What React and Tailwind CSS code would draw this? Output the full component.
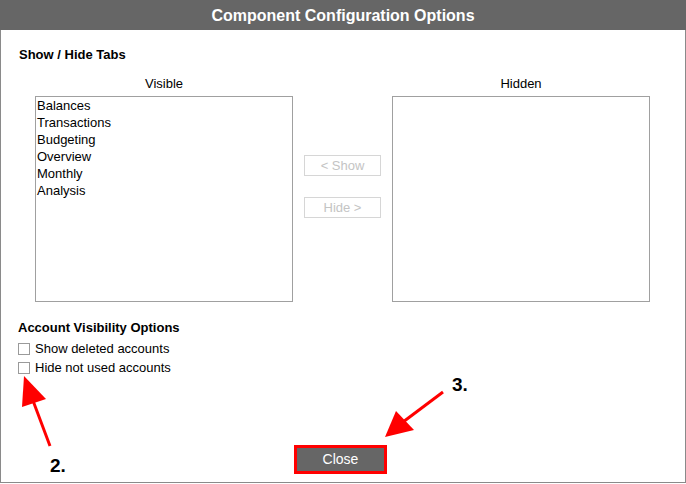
import React from "react";

const VISIBLE_TABS = ["Balances", "Transactions", "Budgeting", "Overview", "Monthly", "Analysis"];

const OPTIONS = ["Show deleted accounts", "Hide not used accounts"];

function Annotations() {
  return (
    <>
      <svg
        className="pointer-events-none absolute left-0 top-0"
        width="686"
        height="484"
        viewBox="0 0 686 484"
      >
        {/* arrow 2 */}
        <line x1="50" y1="446" x2="32" y2="398" stroke="#ff0000" strokeWidth="3" />
        <polygon points="24,376 22,407 46,399" fill="#ff0000" />
        {/* arrow 3 */}
        <line x1="443" y1="392" x2="403" y2="422" stroke="#ff0000" strokeWidth="3" />
        <polygon points="385,437 396,411 414,430" fill="#ff0000" />
      </svg>
      <div className="absolute left-[50px] top-[456px] text-[19px] font-bold leading-[19px] text-black">2.</div>
      <div className="absolute left-[452px] top-[375px] text-[19px] font-bold leading-[19px] text-black">3.</div>
    </>
  );
}

export default function App() {
  return (
    <div
      className="relative w-[686px] h-[484px] bg-white text-[13px] leading-[15px] text-black"
      style={{ fontFamily: '"Liberation Sans", Arial, sans-serif' }}
    >
      {/* Title bar */}
      <div className="flex h-[30px] items-center justify-center bg-[#666666] text-[16px] font-bold text-white">
        Component Configuration Options
      </div>

      <div className="flex h-[453px] flex-col border-x border-b border-[#8a8a8a]">
        {/* Show / Hide tabs */}
        <div className="mt-[17px] pl-[18px] font-bold">Show / Hide Tabs</div>

        <div className="ml-[34px] mt-[14px] flex">
          <div className="flex w-[258px] flex-col">
            <div className="text-center">Visible</div>
            <div className="mt-[5px] h-[206px] border border-[#a0a0a0] px-px leading-[17px]">
              {VISIBLE_TABS.map((t) => (
                <div key={t}>{t}</div>
              ))}
            </div>
          </div>

          <div className="flex w-[99px] flex-col items-center pl-[11px] pr-[11px] pt-[79px]">
            <button className="h-[21px] w-[77px] border border-[#d6d6d6] bg-white text-[#c4c4c4]">
              &lt; Show
            </button>
            <button className="mt-[21px] h-[21px] w-[77px] border border-[#d6d6d6] bg-white text-[#c4c4c4]">
              Hide &gt;
            </button>
          </div>

          <div className="flex w-[258px] flex-col">
            <div className="text-center">Hidden</div>
            <div className="mt-[5px] h-[206px] border border-[#a0a0a0]" />
          </div>
        </div>

        {/* Account visibility */}
        <div className="mt-[18px] pl-[17px] font-bold">Account Visibility Options</div>
        <div className="mt-[4px] flex flex-col pl-[17px]">
          {OPTIONS.map((o) => (
            <label key={o} className="flex h-[19px] items-center gap-[5px]">
              <span className="h-[12px] w-[12px] border border-[#9a9a9a] bg-white" />
              <span>{o}</span>
            </label>
          ))}
        </div>

        <div className="ml-[293px] mt-[68px]">
          <button className="flex h-[29px] w-[93px] items-center justify-center border-[3px] border-[#ff0000] bg-[#666666] text-[14px] text-white">
            Close
          </button>
        </div>
      </div>

      <Annotations />
    </div>
  );
}
